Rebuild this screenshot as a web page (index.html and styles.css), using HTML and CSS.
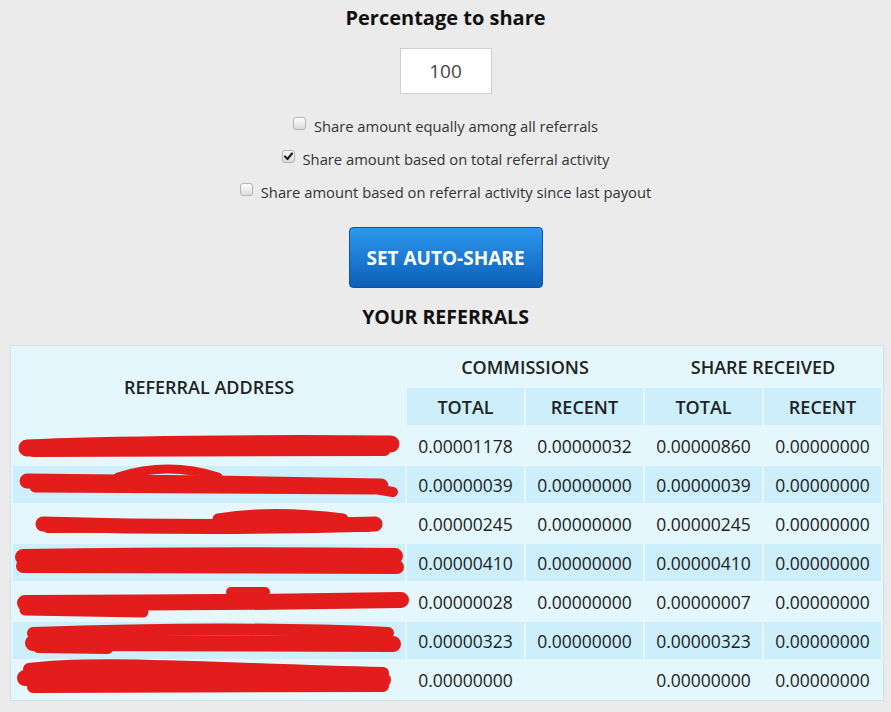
FILE: index.html
```html
<!DOCTYPE html>
<html lang="en">
<head>
    <meta charset="UTF-8">
    <title>Auto-share</title>
    <link rel="stylesheet" href="styles.css">
</head>
<body>
    <div class="share">
        <h3 class="share-title">Percentage to share</h3>
        <input class="percent" type="text" value="100">

        <div class="options">
            <label class="option"><span class="box"></span>Share amount equally among all referrals</label>
            <label class="option"><span class="box checked"><svg viewBox="0 0 13 13" width="13" height="13"><path d="M3 6.5 L5.5 9 L10 3.5" fill="none" stroke="#222" stroke-width="2.2" stroke-linecap="round" stroke-linejoin="round"/></svg></span>Share amount based on total referral activity</label>
            <label class="option"><span class="box"></span>Share amount based on referral activity since last payout</label>
        </div>

        <button class="btn-share">SET AUTO-SHARE</button>

        <h3 class="ref-title">YOUR REFERRALS</h3>
    </div>

    <table class="referrals">
        <thead>
            <tr class="head-top">
                <th rowspan="2" class="addr-head">REFERRAL ADDRESS</th>
                <th colspan="2">COMMISSIONS</th>
                <th colspan="2">SHARE RECEIVED</th>
            </tr>
            <tr class="head-sub">
                <th>TOTAL</th>
                <th>RECENT</th>
                <th>TOTAL</th>
                <th>RECENT</th>
            </tr>
        </thead>
        <tbody>
            <tr>
                <td class="addr"><svg viewBox="0 0 392 37" width="392" height="37"><g class="ink"><path d="M14 21 C 90 17, 260 16, 378 17" stroke-width="17"/><path d="M20 25 L 372 24" stroke-width="10"/></g></svg></td>
                <td>0.00001178</td><td>0.00000032</td><td>0.00000860</td><td>0.00000000</td>
            </tr>
            <tr class="alt">
                <td class="addr"><svg viewBox="0 0 392 37" width="392" height="37"><g class="ink"><path d="M14 15 L 200 17 L 368 20" stroke-width="15"/><path d="M22 21 L 360 23" stroke-width="11"/><path d="M105 11 Q 155 -5 205 11" stroke-width="9"/><path d="M355 22 L 380 26" stroke-width="10"/></g></svg></td>
                <td>0.00000039</td><td>0.00000000</td><td>0.00000039</td><td>0.00000000</td>
            </tr>
            <tr>
                <td class="addr"><svg viewBox="0 0 392 37" width="392" height="37"><g class="ink"><path d="M30 19 Q 200 24 362 19" stroke-width="15"/><path d="M205 14 Q 260 5 330 14" stroke-width="11"/><path d="M35 24 L 355 23" stroke-width="8"/></g></svg></td>
                <td>0.00000245</td><td>0.00000000</td><td>0.00000245</td><td>0.00000000</td>
            </tr>
            <tr class="alt">
                <td class="addr"><svg viewBox="0 0 392 37" width="392" height="37"><g class="ink"><path d="M10 13 Q 200 10 382 12" stroke-width="16"/><path d="M10 22 L 384 23" stroke-width="14"/></g></svg></td>
                <td>0.00000410</td><td>0.00000000</td><td>0.00000410</td><td>0.00000000</td>
            </tr>
            <tr>
                <td class="addr"><svg viewBox="0 0 392 37" width="392" height="37"><g class="ink"><path d="M12 20 Q 200 20 388 17" stroke-width="16"/><path d="M12 27 L 130 29" stroke-width="11"/><path d="M218 9 L 252 9" stroke-width="10"/></g></svg></td>
                <td>0.00000028</td><td>0.00000000</td><td>0.00000007</td><td>0.00000000</td>
            </tr>
            <tr class="alt">
                <td class="addr"><svg viewBox="0 0 392 37" width="392" height="37"><g class="ink"><path d="M20 11 Q 220 4 375 11" stroke-width="12"/><path d="M20 21 L 380 22" stroke-width="16"/><path d="M25 26 L 95 27" stroke-width="10"/></g></svg></td>
                <td>0.00000323</td><td>0.00000000</td><td>0.00000323</td><td>0.00000000</td>
            </tr>
            <tr>
                <td class="addr"><svg viewBox="0 0 392 37" width="392" height="37"><g class="ink"><path d="M16 8 C 80 -1, 200 8, 370 12" stroke-width="12"/><path d="M12 17 L 370 19" stroke-width="16"/><path d="M20 26 L 370 25" stroke-width="12"/></g></svg></td>
                <td>0.00000000</td><td></td><td>0.00000000</td><td>0.00000000</td>
            </tr>
        </tbody>
    </table>
</body>
</html>
```

FILE: styles.css
```css
body {
    font-family: "Open Sans", Arial, sans-serif;
    background-color: #ebebeb;
    color: #222;
    margin: 0;
    padding: 6px 0 0 0;
}
.share {
    display: flex;
    flex-direction: column;
    align-items: center;
}
.share-title {
    font-size: 20px;
    line-height: 24px;
    font-weight: bold;
    color: #111;
    margin: 0 0 18px 0;
}
.percent {
    width: 92px;
    height: 46px;
    box-sizing: border-box;
    border: 1px solid #cfcfcf;
    background: #fff;
    text-align: center;
    font-family: "Open Sans", Arial, sans-serif;
    font-size: 19px;
    color: #444;
    padding: 0;
    margin: 0;
}
.options {
    display: flex;
    flex-direction: column;
    align-items: center;
    margin-top: 15px;
}
.option {
    display: flex;
    align-items: center;
    height: 33px;
    font-size: 14.75px;
    color: #333;
}
.box {
    display: inline-block;
    width: 11px;
    height: 11px;
    border: 1px solid #b4b4b4;
    border-radius: 3px;
    background: linear-gradient(#fdfdfd, #dcdcdc);
    margin-right: 8px;
    position: relative;
    top: -2px;
}
.box svg {
    position: absolute;
    left: -1px;
    top: -1px;
}
.btn-share {
    margin-top: 19px;
    width: 194px;
    height: 61px;
    border: 1px solid #0b55a3;
    border-radius: 4px;
    background: linear-gradient(#2e98ee, #0c5fb6);
    color: #fff;
    font-family: "Open Sans", Arial, sans-serif;
    font-weight: bold;
    font-size: 19px;
    cursor: pointer;
}
.ref-title {
    font-size: 19.5px;
    line-height: 24px;
    font-weight: bold;
    color: #111;
    margin: 17px 0 16px 0;
}
.referrals {
    margin-left: 10px;
    width: 874px;
    border: 1px solid #d3e2e8;
    background-color: #e4f7fd;
    border-spacing: 2px;
    table-layout: fixed;
}
.referrals th {
    font-size: 18px;
    font-weight: 600;
    color: #222;
    padding: 0;
}
.head-top th {
    height: 38px;
}
.addr-head {
    width: 392px;
}
.head-sub th {
    height: 37px;
    background-color: #cdeffb;
}
.referrals td {
    height: 37px;
    padding: 0;
    text-align: center;
    font-size: 17.5px;
    color: #222;
}
.referrals tr.alt td {
    background-color: #cdeffb;
}
.addr svg {
    display: block;
    overflow: visible;
}
.ink path {
    fill: none;
    stroke: #e31c1c;
    stroke-linecap: round;
    stroke-linejoin: round;
}
```
